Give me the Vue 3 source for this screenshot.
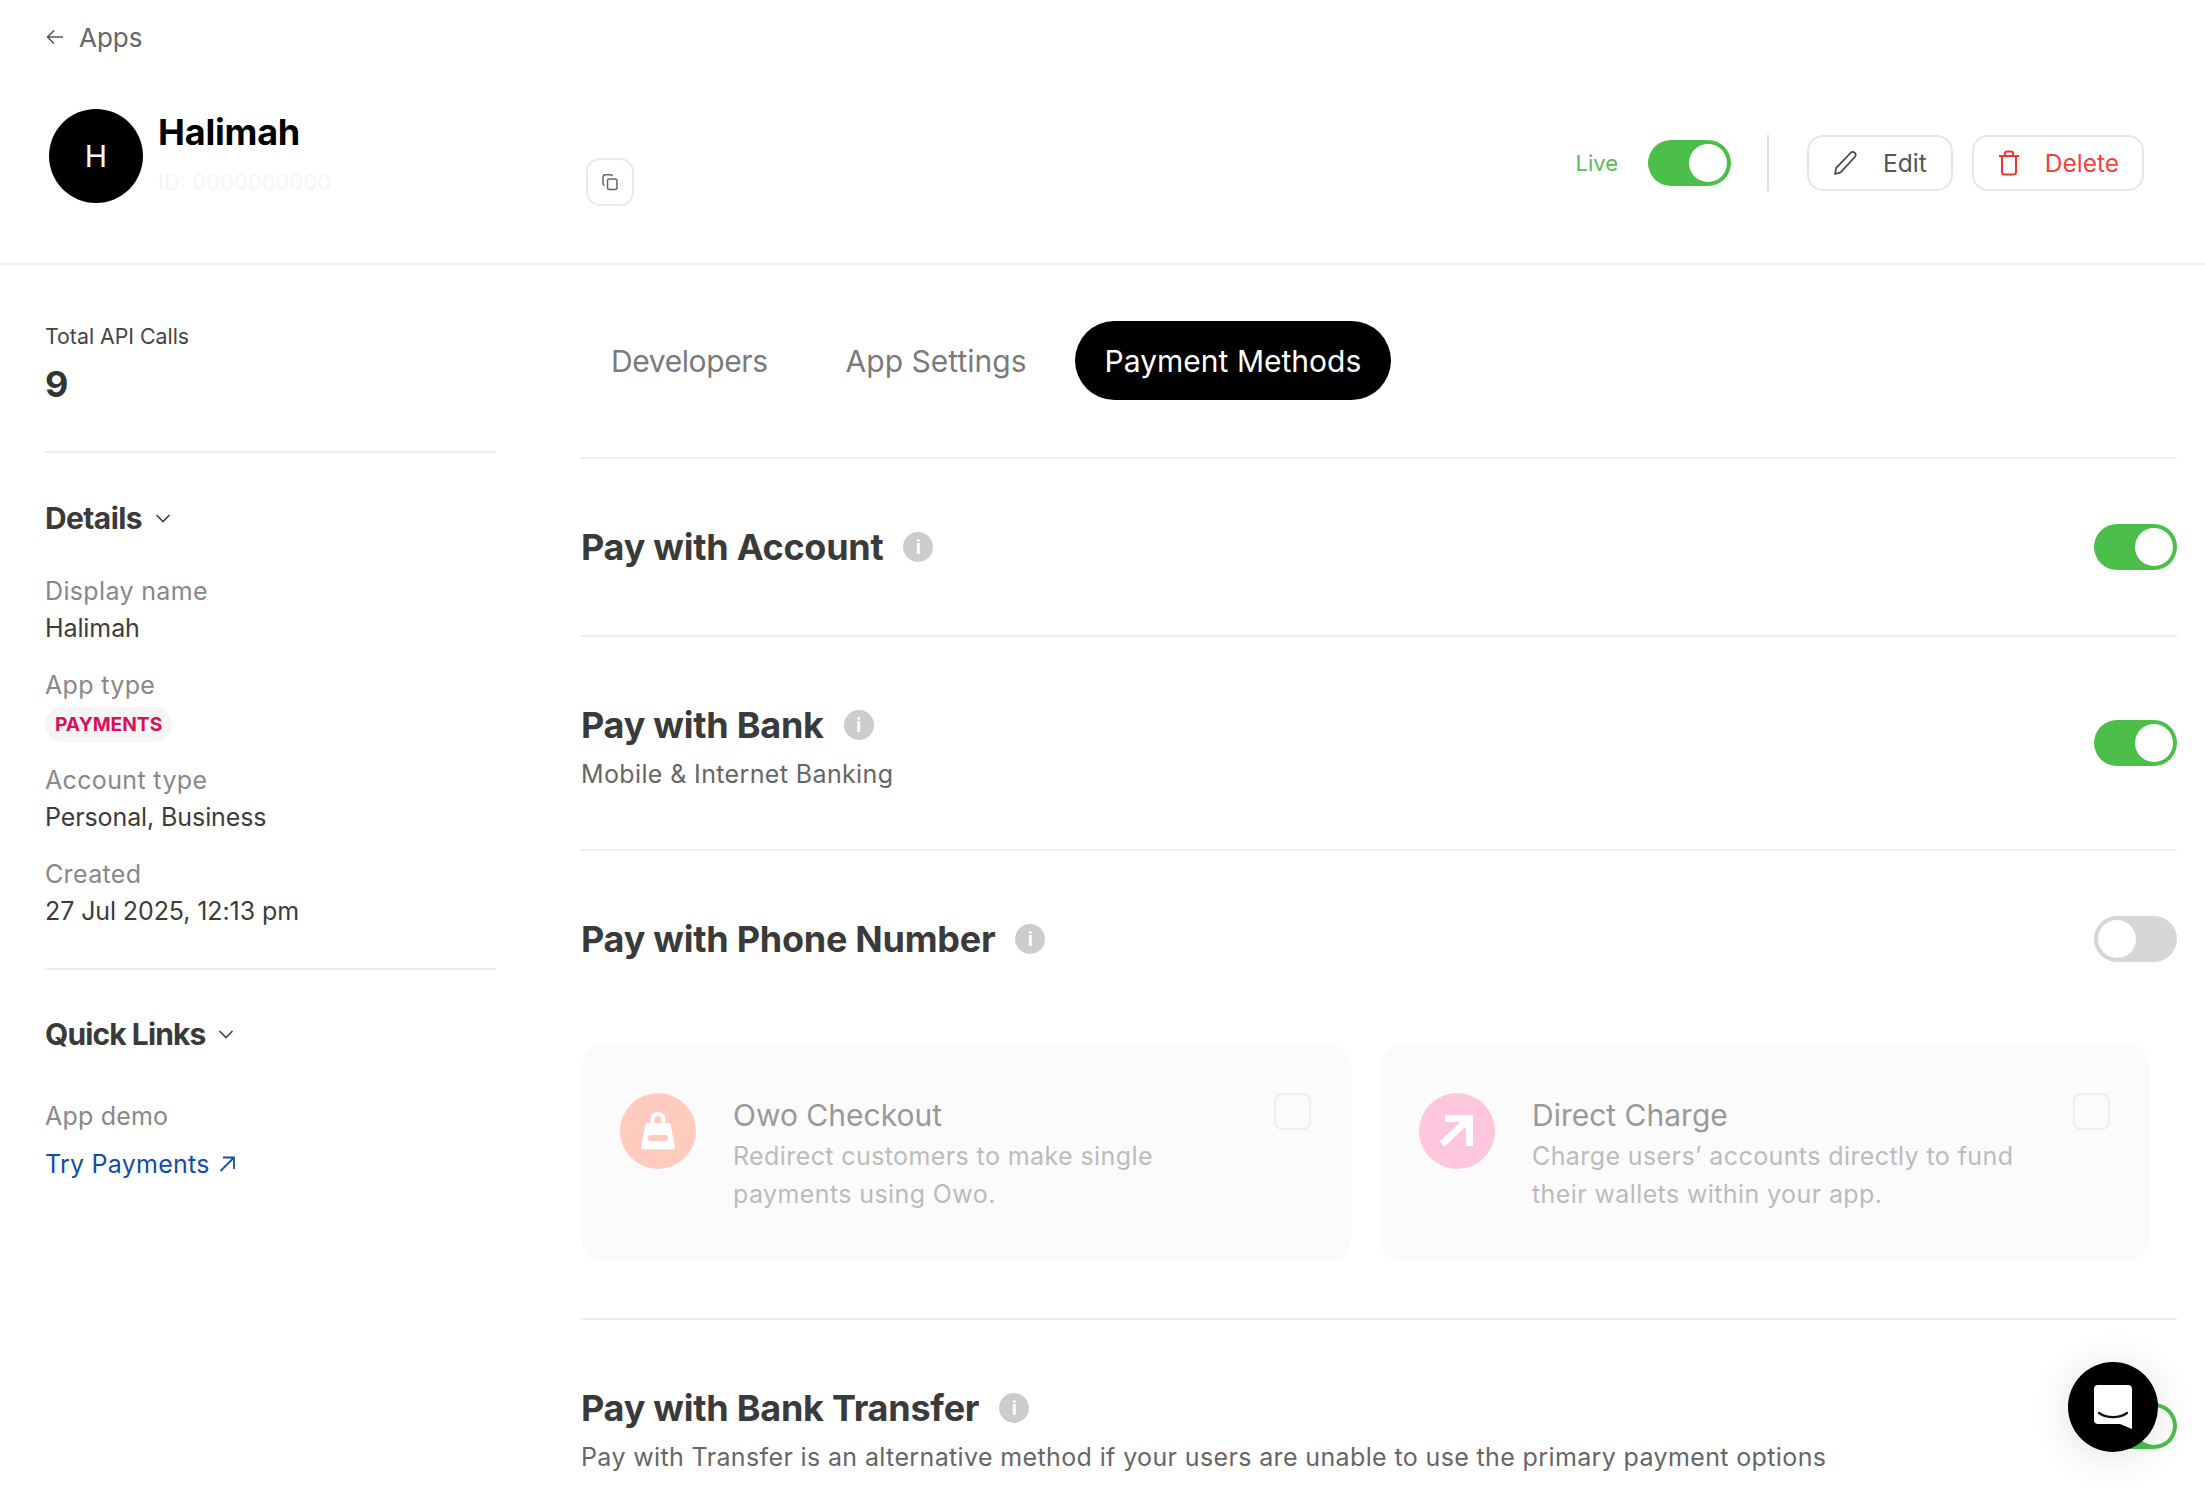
<script setup>
const details = [
  { label: "Display name", value: "Halimah" },
  { label: "App type", badge: "PAYMENTS" },
  { label: "Account type", value: "Personal, Business" },
  { label: "Created", value: "27 Jul 2025, 12:13 pm" },
];

const tabs = ["Developers", "App Settings", "Payment Methods"];
</script>

<template>
  <div class="page">
    <header class="top">
      <a class="back">
        <svg width="20" height="20" viewBox="0 0 20 20" fill="none" stroke="#555" stroke-width="1.6">
          <path d="M18 10H2.500M9 3.500 2.500 10 9 16.500" />
        </svg>
        <span>Apps</span>
      </a>
      <div class="top-row">
        <div class="identity">
          <div class="avatar">H</div>
          <div class="who">
            <div class="name">Halimah</div>
            <div class="id-row">
              <span class="id-text">ID: 0000000000</span>
              <button class="copy">
                <svg width="18" height="18" viewBox="0 0 18 18" fill="none" stroke="#666" stroke-width="1.5">
                  <rect x="6.500" y="6" width="9.500" height="10.500" rx="2" />
                  <path d="M3.500 12.500C2.500 12.200 2 11.500 2 10.500V4c0-1.400.8-2.200 2.200-2.200h5.300c1 0 1.700.5 2 1.400" />
                </svg>
              </button>
            </div>
          </div>
        </div>
        <div class="actions">
          <span class="live">Live</span>
          <span class="switch on"></span>
          <span class="vline"></span>
          <button class="btn">
            <svg width="26" height="26" viewBox="0 0 26 26" fill="none" stroke="#444" stroke-width="1.7" stroke-linejoin="round">
              <path d="M2 24l1.200-6.200L17.600 3c1.300-1.300 2.900-1.300 4.200-.2 1.300 1.200 1.300 2.900 0 4.200L7.600 22.400 2 24Z" />
            </svg>
            <span>Edit</span>
          </button>
          <button class="btn danger">
            <svg width="24" height="26" viewBox="0 0 24 26" fill="none" stroke="#f0352b" stroke-width="2" stroke-linejoin="round">
              <path d="M2 6h20M5 6v16c0 1.500 1 2.500 2.500 2.500h9c1.500 0 2.500-1 2.500-2.500V6M8 6V3.500C8 2.200 8.800 1.500 10 1.500h4c1.200 0 2 .7 2 2V6" />
            </svg>
            <span>Delete</span>
          </button>
        </div>
      </div>
    </header>

    <div class="body">
      <aside class="side">
        <section class="stat">
          <div class="stat-label">Total API Calls</div>
          <div class="stat-value">9</div>
        </section>

        <section class="block">
          <h3 class="side-title">
            Details
            <svg width="18" height="18" viewBox="0 0 18 18" fill="none" stroke="#444" stroke-width="1.7">
              <path d="M2.500 6 9 12.500 15.500 6" />
            </svg>
          </h3>
          <dl class="fields">
            <div v-for="d in details" :key="d.label" class="field">
              <dt>{{ d.label }}</dt>
              <dd v-if="d.value">{{ d.value }}</dd>
              <dd v-else><span class="badge">{{ d.badge }}</span></dd>
            </div>
          </dl>
        </section>

        <section class="links">
          <h3 class="side-title">
            Quick Links
            <svg width="18" height="18" viewBox="0 0 18 18" fill="none" stroke="#444" stroke-width="1.7">
              <path d="M2.500 6 9 12.500 15.500 6" />
            </svg>
          </h3>
          <div class="demo-label">App demo</div>
          <a class="demo-link">
            Try Payments
            <svg width="18" height="18" viewBox="0 0 18 18" fill="none" stroke="#0f4fa8" stroke-width="1.8">
              <path d="M2.500 16 15.500 3M5 2.500h11V14" />
            </svg>
          </a>
        </section>
      </aside>

      <main class="main">
        <nav class="tabs">
          <span v-for="t in tabs" :key="t" class="tab" :class="{ active: t === 'Payment Methods' }">{{ t }}</span>
        </nav>

        <section class="row">
          <div class="row-head">
            <h2 class="row-title">Pay with Account <i class="info">i</i></h2>
          </div>
          <span class="switch on"></span>
        </section>

        <section class="row">
          <div class="row-head">
            <h2 class="row-title">Pay with Bank <i class="info">i</i></h2>
            <p class="row-sub">Mobile &amp; Internet Banking</p>
          </div>
          <span class="switch on"></span>
        </section>

        <section class="row split">
          <div class="row-line">
            <h2 class="row-title">Pay with Phone Number <i class="info">i</i></h2>
            <span class="switch off"></span>
          </div>
          <div class="cards">
            <article class="card">
              <span class="card-icon peach">
                <svg width="44" height="44" viewBox="0 0 44 44" fill="#fff">
                  <path fill-rule="evenodd" d="M22 3c4.600 0 7.500 3.200 7.500 7.500V14h3.200c1 0 1.700.6 1.900 1.600L39 38c.2 1.300-.6 2.200-1.900 2.200H6.900C5.600 40.200 4.800 39.300 5 38l4.400-22.400c.2-1 .9-1.600 1.900-1.600h3.200v-3.500C14.500 6.200 17.400 3 22 3Zm0 4c-2.200 0-3.600 1.500-3.600 3.700V14h7.200v-3.300C25.600 8.500 24.200 7 22 7ZM15 26a2 2 0 0 0 0 6h14a2 2 0 0 0 0-6H15Z" />
                </svg>
              </span>
              <div class="card-text">
                <h4>Owo Checkout</h4>
                <p>Redirect customers to make single payments using Owo.</p>
              </div>
              <span class="check"></span>
            </article>
            <article class="card">
              <span class="card-icon pink">
                <svg width="36" height="36" viewBox="0 0 36 36" fill="none" stroke="#fff" stroke-width="7">
                  <path d="M3 31 30 6M6 5.500h24.500V33" />
                </svg>
              </span>
              <div class="card-text">
                <h4>Direct Charge</h4>
                <p>Charge users’ accounts directly to fund their wallets within your app.</p>
              </div>
              <span class="check"></span>
            </article>
          </div>
        </section>

        <section class="row last">
          <div class="row-head">
            <h2 class="row-title">Pay with Bank Transfer <i class="info">i</i></h2>
            <p class="row-sub">Pay with Transfer is an alternative method if your users are unable to use the primary payment options</p>
          </div>
          <span class="switch on"></span>
        </section>
      </main>
    </div>

    <button class="chat">
      <svg width="40" height="46" viewBox="0 0 40 46" fill="none">
        <path d="M5 1h30c2.500 0 4 1.500 4 4v40l-12-5H5c-2.500 0-4-1.500-4-4V5c0-2.500 1.500-4 4-4Z" fill="#fff" />
        <path d="M6 29c8 5.500 20 5.500 28 0" stroke="#111" stroke-width="2.400" stroke-linecap="round" />
      </svg>
    </button>
  </div>
</template>

<style>
body {
  background: #fff;
  overflow: hidden;
}
</style>

<style scoped>
.page {
  height: 1500px;
  overflow: hidden;
  font-family: Inter, "Noto Sans", sans-serif;
  color: #333;
  position: relative;
}

.top {
  height: 265px;
  box-sizing: border-box;
  padding: 20px 32px 0 45px;
  border-bottom: 2px solid #eee;
}
.back {
  display: flex;
  align-items: center;
  gap: 14px;
  height: 34px;
  font-size: 26px;
  color: #666;
}
.top-row {
  display: flex;
  justify-content: space-between;
  margin-top: 55px;
}
.identity {
  display: flex;
  gap: 15px;
  padding-left: 4px;
}
.avatar {
  width: 94px;
  height: 94px;
  border-radius: 50%;
  background: #000;
  color: #fff;
  font-size: 30px;
  display: flex;
  align-items: center;
  justify-content: center;
}
.name {
  font-size: 36px;
  font-weight: 700;
  letter-spacing: -0.2px;
  color: #000;
  line-height: 46px;
}
.id-row {
  display: flex;
  align-items: center;
  width: 476px;
  justify-content: space-between;
  margin-top: 3px;
}
.id-text {
  font-size: 22px;
  color: #f6f6f6;
}
.copy {
  width: 48px;
  height: 48px;
  border: 2px solid #eaeaea;
  border-radius: 14px;
  background: #fff;
  padding: 0;
  display: flex;
  align-items: center;
  justify-content: center;
}

.actions {
  display: flex;
  align-items: center;
  height: 56px;
  margin-top: 26px;
  padding-right: 29px;
}
.live {
  font-size: 22px;
  color: #5cb85c;
  margin-right: 30px;
}
.vline {
  width: 2px;
  height: 56px;
  background: #ddd;
  margin: 0 38px 0 36px;
}
.btn {
  height: 56px;
  box-sizing: border-box;
  border: 2px solid #e6e6e6;
  border-radius: 16px;
  background: #fff;
  font-family: inherit;
  font-size: 24.500px;
  color: #555;
  display: flex;
  align-items: center;
  gap: 24px;
  padding: 0 24px;
}
.btn.danger {
  color: #f0443c;
  margin-left: 19px;
  gap: 24px;
  padding: 0 23px;
}

.switch {
  display: block;
  position: relative;
  width: 83px;
  height: 46px;
  border-radius: 23px;
  flex: none;
}
.switch::after {
  content: "";
  position: absolute;
  top: 4px;
  width: 38px;
  height: 38px;
  border-radius: 50%;
  background: #fff;
}
.switch.on {
  background: #4cbf4a;
}
.switch.on::after {
  right: 4px;
}
.switch.off {
  background: #d6d6d6;
}
.switch.off::after {
  left: 4px;
}

.body {
  display: flex;
}
.side {
  width: 451px;
  margin-left: 45px;
  flex: none;
}
.stat {
  padding: 57px 0 45px;
  border-bottom: 2px solid #eee;
}
.stat-label {
  font-size: 21.300px;
  line-height: 28px;
  color: #444;
}
.stat-value {
  font-size: 36px;
  font-weight: 700;
  line-height: 44px;
  margin-top: 12px;
}
.block {
  padding: 45px 0 39px;
  border-bottom: 2px solid #eee;
}
.side-title {
  margin: 0;
  display: flex;
  align-items: center;
  gap: 12px;
  font-size: 30px;
  font-weight: 700;
  line-height: 40px;
  letter-spacing: -0.6px;
  color: #3a3a3a;
}
.links .side-title {
  letter-spacing: -0.9px;
}
.fields {
  margin: 35px 0 0;
}
.field {
  margin-bottom: 20.600px;
}
.field:last-child {
  margin-bottom: 0;
}
dt {
  font-size: 25px;
  line-height: 36px;
  letter-spacing: 0.35px;
  color: #888;
}
dd {
  margin: 1px 0 0;
  font-size: 25px;
  line-height: 36px;
  letter-spacing: -0.1px;
  color: #3c3c3c;
}
.badge {
  display: inline-block;
  height: 35px;
  line-height: 35px;
  padding: 0 10px;
  border-radius: 18px;
  background: #f5f5f5;
  color: #d9105c;
  font-size: 19.200px;
  font-weight: 700;
  letter-spacing: 0;
}
.links {
  padding-top: 44px;
}
.demo-label {
  margin-top: 44px;
  font-size: 25px;
  line-height: 36px;
  letter-spacing: 0.2px;
  color: #888;
}
.demo-link {
  display: flex;
  align-items: center;
  gap: 8px;
  margin-top: 12px;
  font-size: 25px;
  line-height: 36px;
  letter-spacing: 0.25px;
  color: #0f4fa8;
}

.main {
  width: 1596px;
  margin-left: 85px;
  flex: none;
}
.tabs {
  display: flex;
  gap: 18px;
  padding: 56px 0 57px;
  border-bottom: 2px solid #eee;
}
.tab {
  height: 79px;
  line-height: 80px;
  padding: 0 30px;
  border-radius: 40px;
  font-size: 30px;
  letter-spacing: 0.02px;
  color: #7a7a7a;
}
.tab:first-child {
  letter-spacing: -0.4px;
}
.tab.active {
  background: #000;
  color: #fff;
}
.row {
  display: flex;
  justify-content: space-between;
  align-items: center;
  padding: 65px 0;
  border-bottom: 2px solid #eee;
}
.row.split {
  display: block;
  padding-bottom: 56px;
}
.row.last {
  border-bottom: none;
}
.row-line {
  display: flex;
  justify-content: space-between;
  align-items: center;
}
.row-title {
  margin: 0;
  display: flex;
  align-items: center;
  gap: 20px;
  height: 46px;
  font-size: 36px;
  font-weight: 700;
  letter-spacing: -0.25px;
  color: #3a3a3a;
}
.info {
  width: 30px;
  height: 30px;
  border-radius: 50%;
  background: #ccc;
  color: #fff;
  font-size: 19px;
  font-weight: 700;
  font-style: normal;
  letter-spacing: 0;
  display: flex;
  align-items: center;
  justify-content: center;
}
.row-sub {
  margin: 16px 0 0;
  font-size: 25px;
  line-height: 20px;
  letter-spacing: 0.37px;
  color: #666;
}
.cards {
  display: grid;
  grid-template-columns: 770px 770px;
  gap: 29px;
  margin-top: 82px;
}
.card {
  display: flex;
  height: 218px;
  box-sizing: border-box;
  padding: 49px 40px 0 39px;
  background: #fbfbfb;
  border-radius: 24px;
}
.card-icon {
  width: 76px;
  height: 76px;
  border-radius: 50%;
  flex: none;
  display: flex;
  align-items: center;
  justify-content: center;
}
.peach {
  background: #ffcbbe;
}
.pink {
  background: #ffc6de;
}
.card-text {
  flex: 1;
  margin-left: 37px;
}
.card-text h4 {
  margin: 2px 0 0;
  font-size: 30px;
  line-height: 40px;
  font-weight: 400;
  color: #999;
}
.card-text p {
  margin: 2px 0 0;
  width: 500px;
  font-size: 25px;
  line-height: 38px;
  letter-spacing: 0.4px;
  color: #bbb;
}
.check {
  width: 37px;
  height: 37px;
  box-sizing: border-box;
  border: 2px solid #eee;
  border-radius: 8px;
  flex: none;
}

.chat {
  position: absolute;
  left: 2068px;
  top: 1362px;
  width: 90px;
  height: 90px;
  border: none;
  border-radius: 50%;
  background: #000;
  padding: 0;
  display: flex;
  align-items: center;
  justify-content: center;
  box-shadow: 0 4px 40px rgba(0, 0, 0, 0.12);
}
</style>
